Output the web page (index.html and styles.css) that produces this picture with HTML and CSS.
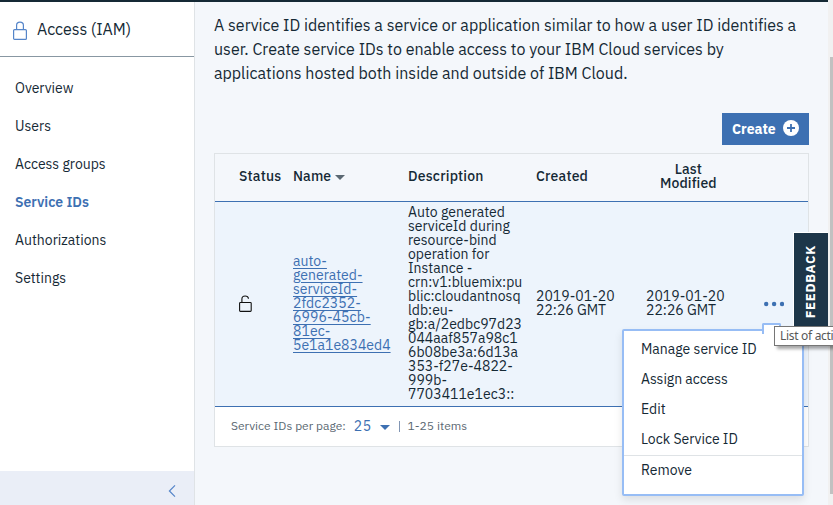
FILE: index.html
```html
<!DOCTYPE html>
<html lang="en">
<head>
<meta charset="utf-8">
<title>Access (IAM) - Service IDs</title>
<link rel="stylesheet" href="styles.css">
</head>
<body>
<div class="topbar"></div>
<div class="shell">
  <aside class="sidebar">
    <div class="side-head">
      <svg class="lock" width="16" height="20" viewBox="0 0 16 20" fill="none" stroke="#5585c9" stroke-width="1.2"><rect x="1.6" y="8.6" width="12.8" height="9.8" rx="1"/><path d="M4.6 8.6V4.2C4.6 2.4 6 1.1 8 1.1s3.4 1.3 3.4 3.1v4.4"/></svg>
      <span>Access (IAM)</span>
    </div>
    <nav>
      <a>Overview</a>
      <a>Users</a>
      <a>Access groups</a>
      <a class="active">Service IDs</a>
      <a>Authorizations</a>
      <a>Settings</a>
    </nav>
    <div class="side-foot">
      <svg width="8" height="14" viewBox="0 0 8 14" fill="none" stroke="#5585c9" stroke-width="1.2"><path d="M7 1.4 1.4 7 7 12.6"/></svg>
    </div>
  </aside>
  <main>
    <p class="intro">A service ID identifies a service or application similar to how a user ID identifies a<br>user. Create service IDs to enable access to your IBM Cloud services by<br>applications hosted both inside and outside of IBM Cloud.</p>
    <div class="toolbar">
      <button class="create"><span>Create</span>
        <svg width="16" height="16" viewBox="0 0 16 16"><circle cx="8" cy="8" r="8" fill="#fff"/><path d="M8 4v8M4 8h8" stroke="#3d70b2" stroke-width="1.8"/></svg>
      </button>
    </div>
    <section class="table">
      <div class="row head">
        <div class="c-status">Status</div>
        <div class="c-name">Name<i class="caret"></i></div>
        <div class="c-desc">Description</div>
        <div class="c-date">Created</div>
        <div class="c-mod"><span>Last<br>Modified</span></div>
      </div>
      <div class="row item">
        <div class="c-status">
          <svg width="14" height="18" viewBox="0 0 14 18" fill="none" stroke="#111" stroke-width="1.1"><rect x=".6" y="7.5" width="11.6" height="8.9" rx=".8"/><path d="M2.9 7.5V4C2.9 2.1 4.3 1 6.1 1c1.9 0 3.2 1 3.4 2.7"/></svg>
        </div>
        <div class="c-name"><a>auto-<br>generated-<br>serviceId-<br><span class="num">2fdc2352-<br>6996-45cb-<br>81ec-</span><br>5e1a1e834ed4</a></div>
        <div class="c-desc">Auto generated<br>serviceId during<br>resource-bind<br>operation for<br>Instance -<br>crn:v1:bluemix:pu<br>blic:cloudantnosq<br>ldb:eu-<br>gb:a/2edbc97d23<br>044aaf857a98c1<br>6b08be3a:6d13a<br>353-f27e-4822-<br>999b-<br>7703411e1ec3::</div>
        <div class="c-date"><span class="date">2019-01-20</span><br>22:26 GMT</div>
        <div class="c-mod"><span class="date">2019-01-20</span><br>22:26 GMT</div>
        <div class="c-more">
          <svg width="20" height="6" viewBox="0 0 20 6" fill="#3d70b2"><circle cx="2.2" cy="3" r="2.2"/><circle cx="10.1" cy="3" r="2.2"/><circle cx="18" cy="3" r="2.2"/></svg>
        </div>
      </div>
      <div class="pager">
        <span class="per">Service IDs per page:</span><span class="size">25</span><i class="caret blue"></i><i class="bar"></i><span class="range">1-25 items</span>
      </div>
    </section>
  </main>
  <div class="scroll"><div class="thumb"></div></div>
</div>
<div class="feedback"><span>FEEDBACK</span></div>
<div class="menu">
  <a>Manage service ID</a>
  <a class="assign">Assign access</a>
  <a>Edit</a>
  <a>Lock Service ID</a>
  <a class="last">Remove</a>
</div>
<div class="tip">List of actions</div>
</body>
</html>
```
FILE: styles.css
```css
* { box-sizing: border-box; }
html, body { height: 100%; }
body {
  margin: 0;
  position: relative;
  display: flex;
  flex-direction: column;
  overflow: hidden;
  background: #f4f7fb;
  color: #152935;
  font: 14px/14px "IBM Plex Sans", Roboto, sans-serif;
}
svg { display: block; flex: none; }
.topbar { height: 2px; background: #152935; width: 828px; flex: none; }
.shell { flex: 1; display: flex; min-height: 0; }

.sidebar {
  width: 195px;
  flex: none;
  display: flex;
  flex-direction: column;
  background: #fff;
  border-right: 1px solid #dfe3e6;
}
.side-head {
  height: 55px;
  display: flex;
  align-items: center;
  padding: 0 0 0 12px;
  gap: 9px;
  font-size: 16px;
  letter-spacing: -.05px;
  border-bottom: 1px solid #8897a2;
}
.side-head .lock { margin-top: 3px; }
nav { flex: 1; padding: 12px 0 0 15px; }
nav a { display: block; line-height: 38px; }
nav .active { color: #3d70b2; font-weight: 600; }
.side-foot {
  height: 34px;
  background: #eaeef7;
  display: flex;
  align-items: center;
  justify-content: flex-end;
  padding: 6px 18px 0 0;
}

main { flex: 1; padding: 11px 19px 0 19px; }
.intro {
  margin: 0;
  font-size: 16px;
  line-height: 24px;
  white-space: nowrap;
  letter-spacing: .005px;
}
.toolbar { display: flex; justify-content: flex-end; padding: 28px 0 8px; }
.create {
  width: 87px;
  height: 32px;
  display: flex;
  align-items: center;
  justify-content: space-between;
  padding: 0 10px;
  border: 0;
  background: #3d70b2;
  color: #fff;
  font: inherit;
  font-weight: 700;
}
.create svg { position: relative; top: -1px; }

.table { border: 1px solid #dfe3e6; }
.row {
  display: grid;
  grid-template-columns: 54px 115px 128px 110px 118px 1fr;
  align-items: center;
  padding-left: 24px;
  white-space: nowrap;
}
.head {
  height: 48px;
  font-weight: 500;
  letter-spacing: .2px;
  border-bottom: 1px solid #3d70b2;
  padding-bottom: 3px;
}
.head .c-name { display: flex; align-items: center; letter-spacing: .1px; }
.head .c-mod span { display: inline-block; margin-left: 14px; text-align: center; letter-spacing: .1px; }
.item { height: 205px; background: #edf4fc; border-bottom: 1px solid #3d70b2; padding-bottom: 3px; }
.item .c-name { letter-spacing: .01px; }
.item .c-name a { color: #3d70b2; text-decoration: underline; text-underline-offset: 2px; }
.item .c-name .num { letter-spacing: .08px; }
.item .c-desc { letter-spacing: .01px; }
.item .date { letter-spacing: .02px; }
.item .c-status, .item .c-more { padding-top: 2px; }
.caret {
  width: 0;
  height: 0;
  margin-left: 4px;
  border: 5px solid transparent;
  border-top-color: #5a6872;
  border-bottom: 0;
}
.head .caret { margin-top: 2px; }
.caret.blue { border-top-color: #3d70b2; margin: 4px 9px 0 9px; }
.pager {
  height: 39px;
  background: #fff;
  display: flex;
  align-items: center;
  padding: 0 0 2px 16px;
  color: #5a6872;
  font-size: 12px;
}
.per { letter-spacing: .02px; }
.size { color: #3d70b2; font-size: 14px; letter-spacing: .4px; margin-left: 8px; }
.bar { width: 1px; height: 11px; margin-top: 1px; background: #8296b4; }
.range { margin-left: 7px; letter-spacing: .05px; }

.scroll { width: 5px; background: #f1f1f1; margin-top: -2px; padding: 57px 0 0 2px; }
.thumb { height: 437px; background: #c1c1c1; }

.feedback {
  position: absolute;
  left: 793px;
  top: 232px;
  width: 35px;
  height: 96px;
  border: 1px solid #fff;
  border-right: 0;
  background: #1d3649;
  color: #fff;
  display: flex;
  align-items: center;
  justify-content: center;
  padding-top: 4px;
}
.feedback span {
  writing-mode: vertical-rl;
  transform: rotate(180deg);
  font-size: 13px;
  font-weight: 700;
  letter-spacing: .8px;
}
.menu {
  position: absolute;
  left: 622px;
  top: 329px;
  width: 182px;
  height: 167px;
  padding-top: 3px;
  background: #fff;
  border: 2px solid #97bdf5;
  border-radius: 2px;
  box-shadow: 0 4px 8px rgba(0, 0, 0, .1);
}
.menu::before {
  content: "";
  position: absolute;
  right: 21px;
  top: -8px;
  width: 15px;
  height: 9px;
  background: #fff;
  border: 2px solid #97bdf5;
  border-bottom: 0;
  border-radius: 2px 2px 0 0;
}
.menu a { display: block; padding-left: 17px; line-height: 30px; }
.menu .assign { letter-spacing: -.05px; }
.menu .last { border-top: 1px solid #dfe3e6; margin-top: 1px; line-height: 28px; }
.tip {
  position: absolute;
  left: 774px;
  top: 326px;
  width: 100px;
  height: 20px;
  padding-left: 5px;
  background: #fff;
  border: 1px solid #767676;
  box-shadow: 3px 3px 3px rgba(0, 0, 0, .35);
  color: #575757;
  font: 12px/18px "Noto Sans", sans-serif;
  letter-spacing: -.3px;
  white-space: nowrap;
}
```
